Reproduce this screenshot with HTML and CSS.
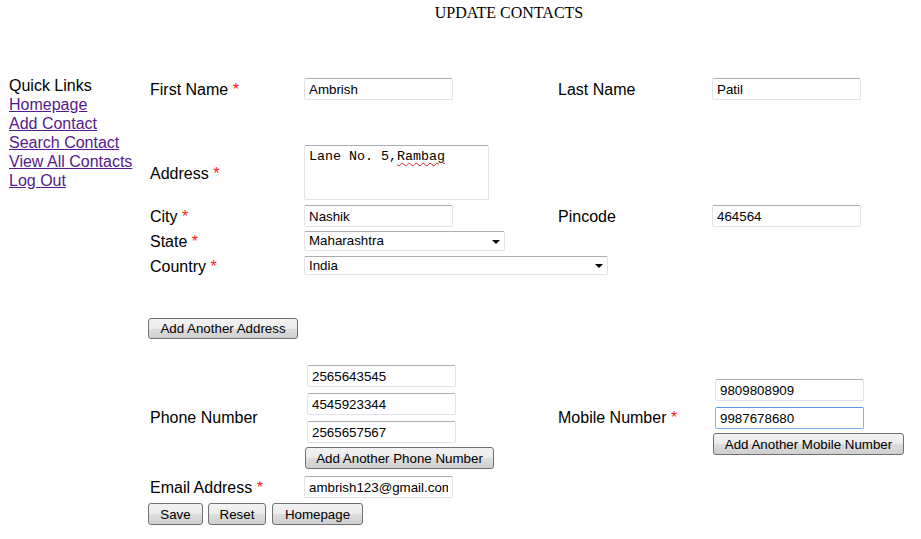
FILE: index.html
```html
<!DOCTYPE html>
<html>
<head>
<meta charset="utf-8">
<title>Update Contacts</title>
<link rel="stylesheet" href="styles.css">
</head>
<body>
<div class="title">UPDATE CONTACTS</div>
<div class="page">
  <div class="sidebar">
    <div class="sidebar-head">Quick Links</div>
    <a class="qlink" href="#">Homepage</a>
    <a class="qlink" href="#">Add Contact</a>
    <a class="qlink" href="#">Search Contact</a>
    <a class="qlink" href="#">View All Contacts</a>
    <a class="qlink" href="#">Log Out</a>
  </div>
  <form class="form">
    <div class="row row-first">
      <label class="label">First Name <span class="req">*</span></label>
      <div class="field"><input class="input" type="text" value="Ambrish"></div>
      <label class="label">Last Name</label>
      <div class="field"><input class="input" type="text" value="Patil"></div>
    </div>
    <div class="row row-address">
      <label class="label">Address <span class="req">*</span></label>
      <div class="field"><div class="textarea">Lane No. 5,<span class="misspelt">Rambag</span></div></div>
    </div>
    <div class="row row-city">
      <label class="label">City <span class="req">*</span></label>
      <div class="field"><input class="input" type="text" value="Nashik"></div>
      <label class="label">Pincode</label>
      <div class="field"><input class="input" type="text" value="464564"></div>
    </div>
    <div class="row row-state">
      <label class="label">State <span class="req">*</span></label>
      <div class="field wide">
        <div class="select select-state">Maharashtra</div>
      </div>
    </div>
    <div class="row row-country">
      <label class="label">Country <span class="req">*</span></label>
      <div class="field wide">
        <div class="select select-country">India</div>
      </div>
    </div>
    <div class="row-btn row-addr-btn">
      <button type="button" class="btn btn-address">Add Another Address</button>
    </div>
    <div class="row row-phone">
      <label class="label">Phone Number</label>
      <div class="field stack">
        <input class="input stack-input" type="text" value="2565643545">
        <input class="input stack-input" type="text" value="4545923344">
        <input class="input stack-input" type="text" value="2565657567">
        <button type="button" class="btn btn-phone">Add Another Phone Number</button>
      </div>
      <label class="label">Mobile Number <span class="req">*</span></label>
      <div class="field stack">
        <input class="input stack-input" type="text" value="9809808909">
        <input class="input stack-input focused" type="text" value="9987678680">
        <button type="button" class="btn btn-mobile">Add Another Mobile Number</button>
      </div>
    </div>
    <div class="row row-email">
      <label class="label">Email Address <span class="req">*</span></label>
      <div class="field"><input class="input" type="text" value="ambrish123@gmail.com"></div>
    </div>
    <div class="row-btn row-actions">
      <button type="button" class="btn btn-save">Save</button>
      <button type="button" class="btn btn-reset">Reset</button>
      <button type="button" class="btn btn-home">Homepage</button>
    </div>
  </form>
</div>
</body>
</html>
```
FILE: styles.css
```css
html, body {
  margin: 0;
  padding: 0;
  background: #ffffff;
}
body {
  font-family: "Liberation Sans", Arial, sans-serif;
  font-size: 16px;
  color: #000;
}
.title {
  font-family: "Liberation Serif", "Times New Roman", serif;
  font-size: 16px;
  line-height: 18px;
  padding-top: 4px;
  padding-left: 97px;
  text-align: center;
}
.page {
  display: flex;
  margin-top: 54px;
}
.sidebar {
  width: 139px;
  padding-left: 9px;
  display: flex;
  flex-direction: column;
  line-height: 19px;
  flex-shrink: 0;
}
.qlink {
  color: #551a8b;
  text-decoration: underline;
  align-self: flex-start;
}
.form {
  padding-top: 2px;
  display: flex;
  flex-direction: column;
}
.row {
  display: grid;
  grid-template-columns: 156px 252px 156px auto;
  align-items: center;
}
.label {
  padding-left: 2px;
  padding-top: 2px;
  line-height: 16px;
}
.req {
  color: #ff1a1a;
}
.field.wide {
  grid-column: 2 / span 3;
}
.input {
  box-sizing: border-box;
  width: 149px;
  height: 22px;
  margin: 0;
  padding: 0 4px;
  font-family: "Liberation Sans", Arial, sans-serif;
  font-size: 13.33px;
  color: #000;
  background: #fff;
  border: 1px solid #e2e3ea;
  border-top-color: #abadb3;
  border-radius: 2px;
  outline: none;
  display: block;
}
.input.focused {
  border-color: #7eb4ea;
  border-top-color: #569de5;
}
.textarea {
  box-sizing: border-box;
  width: 185px;
  height: 55px;
  padding: 3px 4px;
  font-family: "Liberation Mono", "Courier New", monospace;
  font-size: 13.33px;
  line-height: 15px;
  background: #fff;
  border: 1px solid #e2e3ea;
  border-top-color: #abadb3;
  border-radius: 2px;
  white-space: pre;
}
.misspelt {
  text-decoration: underline wavy #e02020;
  text-decoration-thickness: 1px;
  text-underline-offset: 2px;
}
.select {
  position: relative;
  box-sizing: border-box;
  height: 20px;
  padding: 0 4px;
  font-size: 13.33px;
  line-height: 18px;
  background: #fff;
  border: 1px solid #e2e3ea;
  border-top-color: #abadb3;
  border-radius: 2px;
}
.select::after {
  content: "";
  position: absolute;
  right: 4px;
  top: 8px;
  width: 0;
  height: 0;
  border-left: 4px solid transparent;
  border-right: 4px solid transparent;
  border-top: 4px solid #000;
}
.select-state {
  width: 201px;
}
.select-country {
  width: 304px;
  height: 19px;
  line-height: 17px;
}
.select-country::after {
  top: 7px;
}
.stack {
  display: flex;
  flex-direction: column;
  align-items: flex-start;
  padding-left: 1px;
}
.stack-input {
  margin-left: 2px;
  margin-bottom: 6px;
}
.stack-input:nth-last-of-type(1) {
  margin-bottom: 4px;
}
.btn {
  box-sizing: border-box;
  height: 22px;
  margin: 0;
  padding: 0;
  font-family: "Liberation Sans", Arial, sans-serif;
  font-size: 13.33px;
  color: #000;
  border: 1px solid #707070;
  border-radius: 3px;
  background: linear-gradient(to bottom, #f2f2f2 0%, #ebebeb 50%, #dddddd 51%, #cfcfcf 100%);
}
.btn-address { width: 150px; height: 21px; }
.btn-phone { width: 189px; }
.btn-mobile { width: 191px; }
.btn-save { width: 55px; }
.btn-reset { width: 58px; }
.btn-home { width: 91px; }
.row-btn {
  display: flex;
  gap: 5px;
}
.btn-home { margin-left: 1px; }
.row-address { margin-top: 45px; }
.row-city { margin-top: 5px; }
.row-state { margin-top: 4px; }
.row-country { margin-top: 5px; }
.row-addr-btn { margin-top: 43px; }
.row-phone { margin-top: 26px; }
.row-email { margin-top: 7px; }
.row-actions { margin-top: 5px; }
```
